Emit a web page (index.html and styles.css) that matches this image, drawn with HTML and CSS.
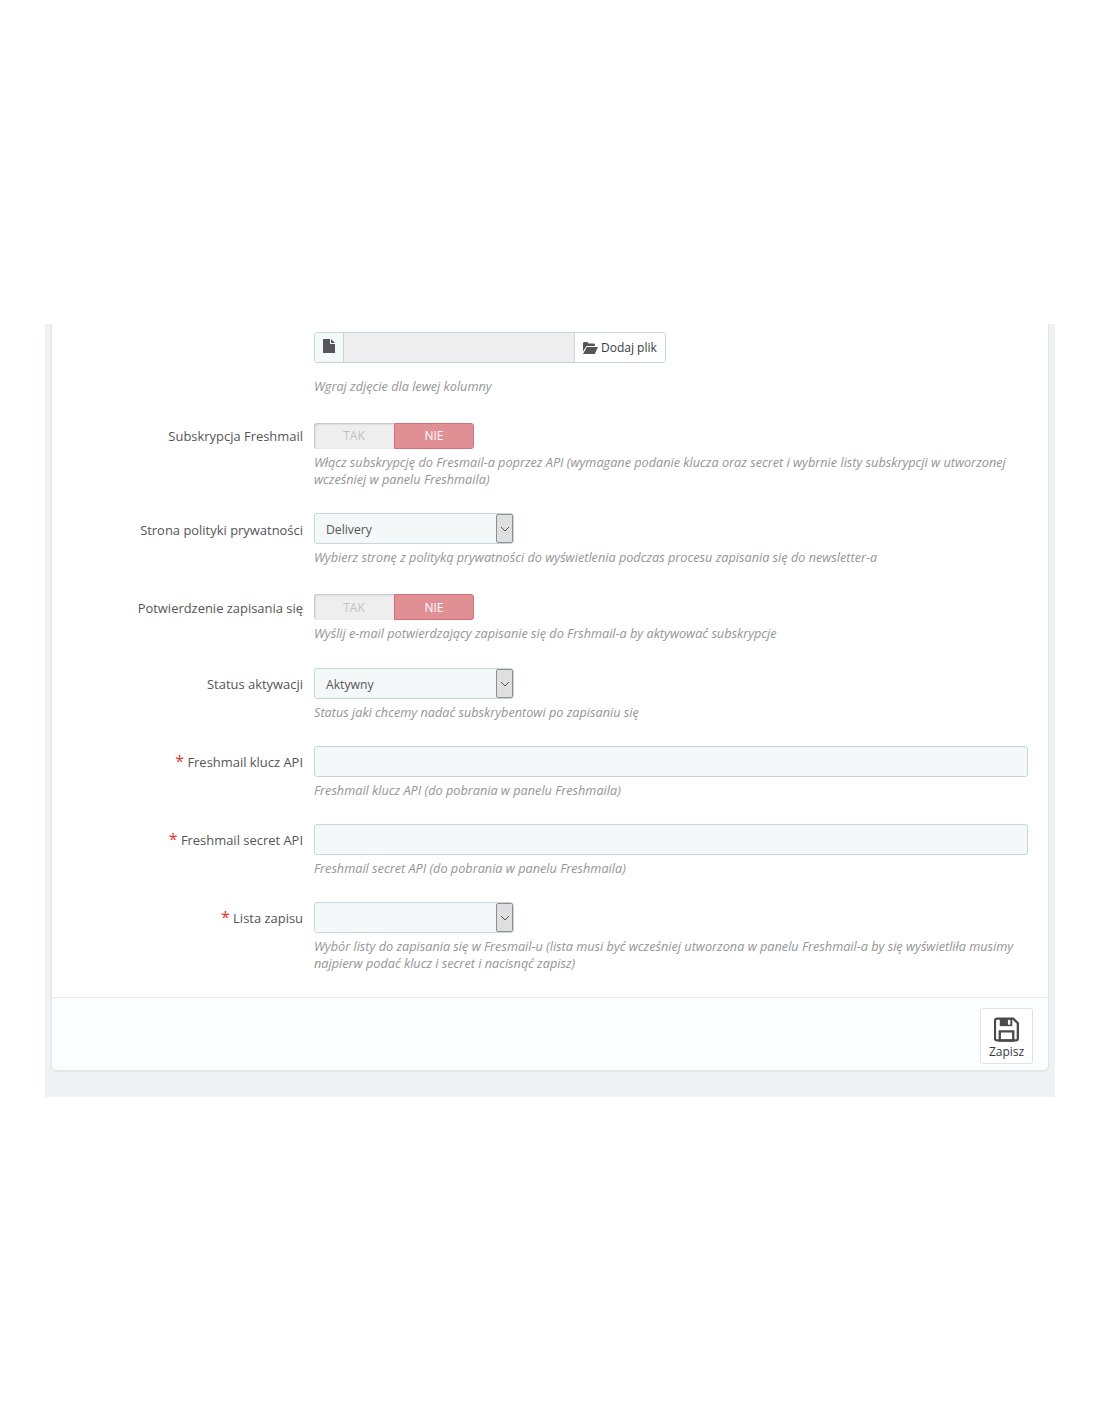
FILE: index.html
```html
<!DOCTYPE html>
<html lang="pl">
<head>
<meta charset="utf-8">
<title>Freshmail</title>
<link rel="stylesheet" href="styles.css">
</head>
<body>
<div class="page">
  <div class="panel">
    <form class="form">
      <div class="row row-wide">
        <div class="label"></div>
        <div class="control">
          <div class="file">
            <span class="file-icon"><svg width="12" height="14" viewBox="0 0 12 14"><path d="M0 0h7v5h5v9H0z" fill="#555"/><path d="M8 0l4 4H8z" fill="#555"/></svg></span>
            <span class="file-name"></span>
            <span class="file-btn"><svg width="15" height="12" viewBox="0 0 15 12"><path d="M0 1.500C0 .7.600 0 1.400 0h3l1.200 1.500h5c.8 0 1.400.6 1.400 1.400V4H3.500L0 9.500z" fill="#555"/><path d="M3.900 5H15l-3.200 7H0z" fill="#555"/></svg>Dodaj plik</span>
          </div>
          <p class="help help-file">Wgraj zdjęcie dla lewej kolumny</p>
        </div>
      </div>
      <div class="row">
        <div class="label label-toggle">Subskrypcja Freshmail</div>
        <div class="control">
          <div class="toggle"><span class="tak">TAK</span><span class="nie">NIE</span></div>
          <p class="help">Włącz subskrypcję do Fresmail-a poprzez API (wymagane podanie klucza oraz secret i wybrnie listy subskrypcji w utworzonej wcześniej w panelu Freshmaila)</p>
        </div>
      </div>
      <div class="row row-wide">
        <div class="label label-low">Strona polityki prywatności</div>
        <div class="control">
          <div class="select"><span class="select-value">Delivery</span><span class="select-arrow"><svg width="10" height="6" viewBox="0 0 10 6"><path d="M1 1l4 4 4-4" fill="none" stroke="#555" stroke-width="1"/></svg></span></div>
          <p class="help">Wybierz stronę z polityką prywatności do wyświetlenia podczas procesu zapisania się do newsletter-a</p>
        </div>
      </div>
      <div class="row row-confirm">
        <div class="label label-toggle">Potwierdzenie zapisania się</div>
        <div class="control">
          <div class="toggle"><span class="tak">TAK</span><span class="nie">NIE</span></div>
          <p class="help">Wyślij e-mail potwierdzający zapisanie się do Frshmail-a by aktywować subskrypcje</p>
        </div>
      </div>
      <div class="row">
        <div class="label">Status aktywacji</div>
        <div class="control">
          <div class="select"><span class="select-value">Aktywny</span><span class="select-arrow"><svg width="10" height="6" viewBox="0 0 10 6"><path d="M1 1l4 4 4-4" fill="none" stroke="#555" stroke-width="1"/></svg></span></div>
          <p class="help">Status jaki chcemy nadać subskrybentowi po zapisaniu się</p>
        </div>
      </div>
      <div class="row">
        <div class="label"><span class="req">*</span> Freshmail klucz API</div>
        <div class="control">
          <div class="input"></div>
          <p class="help">Freshmail klucz API (do pobrania w panelu Freshmaila)</p>
        </div>
      </div>
      <div class="row">
        <div class="label"><span class="req">*</span> Freshmail secret API</div>
        <div class="control">
          <div class="input"></div>
          <p class="help">Freshmail secret API (do pobrania w panelu Freshmaila)</p>
        </div>
      </div>
      <div class="row">
        <div class="label"><span class="req">*</span> Lista zapisu</div>
        <div class="control">
          <div class="select"><span class="select-value"></span><span class="select-arrow"><svg width="10" height="6" viewBox="0 0 10 6"><path d="M1 1l4 4 4-4" fill="none" stroke="#555" stroke-width="1"/></svg></span></div>
          <p class="help">Wybór listy do zapisania się w Fresmail-u (lista musi być wcześniej utworzona w panelu Freshmail-a by się wyświetliła musimy najpierw podać klucz i secret i nacisnąć zapisz)</p>
        </div>
      </div>
    </form>
    <div class="footer">
      <button class="save" type="button">
        <svg width="25" height="25" viewBox="0 0 26 25"><path d="M3 1.200h17l4.800 4.800v15.800c0 1.100-.9 2-2 2H3c-1.100 0-2-.9-2-2V3.200c0-1.100.9-2 2-2z" fill="none" stroke="#4a4a4a" stroke-width="2.400"/><path d="M6 1h13v8H6z" fill="#4a4a4a"/><path d="M14.500 2.500h2.500v5h-2.500z" fill="#fff"/><path d="M6 14.500h14V24H6z" fill="none" stroke="#4a4a4a" stroke-width="2.400"/></svg>
        <span>Zapisz</span>
      </button>
    </div>
  </div>
</div>
</body>
</html>
```
FILE: styles.css
```css
html, body {
  margin: 0;
  padding: 0;
  background: #fff;
}
body {
  padding-top: 324px;
  font-family: "Open Sans", "Liberation Sans", sans-serif;
  font-size: 13px;
  color: #555;
}
.page {
  margin: 0 45px;
  padding: 0 7px 27px;
  background: #eff1f2;
  overflow: hidden;
}
.panel {
  background: #fff;
  border-radius: 0 0 5px 5px;
  box-shadow: 0 0 0 1px #e3e5e6, 0 1px 2px rgba(0, 0, 0, .18);
}
.form {
  padding: 8px 20px 0 0;
}
.row {
  display: grid;
  grid-template-columns: 251px 1fr;
  column-gap: 11px;
  margin-bottom: 25px;
}
.row-wide { margin-bottom: 28px; }
.row-confirm { margin-bottom: 26px; }
.label {
  text-align: right;
  font-size: 12.950px;
  line-height: 18px;
  padding-top: 7px;
  color: #555;
}
.label-low { padding-top: 8px; }
.label-toggle { padding-top: 4px; }
.row-confirm .label-toggle { padding-top: 5px; }
.req {
  color: #e8312a;
  font-size: 16px;
  line-height: 14px;
}
.help {
  margin: 5px 0 0;
  font-style: italic;
  font-size: 12.700px;
  line-height: 17px;
  color: #959595;
}
.help-file { margin-top: 15px; }
.file {
  display: flex;
  width: 352px;
  height: 31px;
  box-sizing: border-box;
  border: 1px solid #c7d6db;
  border-radius: 3px;
  overflow: hidden;
}
.file-icon {
  flex: 0 0 29px;
  display: flex;
  align-items: center;
  justify-content: center;
  background: #f5f8f9;
  border-right: 1px solid #c7d6db;
  padding-bottom: 3px;
  box-sizing: border-box;
}
.file-name {
  flex: 1;
  background: #eee;
}
.file-btn {
  flex: 0 0 91px;
  display: flex;
  align-items: center;
  gap: 3px;
  padding-left: 8px;
  box-sizing: border-box;
  background: #fff;
  border-left: 1px solid #d3d8db;
  color: #363a41;
  font-size: 12px;
}
.toggle {
  display: flex;
  width: 160px;
  height: 26px;
  font-size: 12px;
  line-height: 26px;
  text-align: center;
}
.row-confirm .toggle { line-height: 28px; }
.tak {
  flex: 0 0 80px;
  color: #c3c3c3;
  background: #eee;
  border-radius: 3px 0 0 3px;
  box-shadow: inset 1px 1px 2px rgba(0, 0, 0, .2);
}
.nie {
  flex: 0 0 80px;
  box-sizing: border-box;
  color: #fff;
  line-height: 24px;
  background: #e08f95;
  border: 1px solid #cf7278;
  border-radius: 0 3px 3px 0;
}
.row-confirm .nie { line-height: 26px; }
.select {
  display: flex;
  width: 200px;
  height: 31px;
  box-sizing: border-box;
  background: #f5f8f9;
  border: 1px solid #c7d6db;
  border-radius: 3px;
  overflow: hidden;
}
.select-value {
  flex: 1;
  padding-left: 11px;
  font-size: 12.200px;
  line-height: 32px;
  color: #555;
}
.select-arrow {
  flex: 0 0 17px;
  display: flex;
  align-items: center;
  justify-content: center;
  box-sizing: border-box;
  background: #dfdfdf;
  border: 1px solid #8f8f8f;
  border-radius: 2px;
}
.input {
  height: 31px;
  box-sizing: border-box;
  background: #f5f8f9;
  border: 1px solid #c7d6db;
  border-radius: 3px;
}
.footer {
  display: flex;
  justify-content: flex-end;
  height: 73px;
  box-sizing: border-box;
  padding: 10px 15px 0 0;
  background: #fcfdfe;
  border-top: 1px solid #e8ebec;
  border-radius: 0 0 5px 5px;
}
.save {
  display: flex;
  flex-direction: column;
  align-items: center;
  width: 53px;
  height: 56px;
  box-sizing: border-box;
  padding: 8px 0 0;
  background: #fff;
  border: 1px solid #dfe3e5;
  border-radius: 3px;
  font-family: inherit;
  font-size: 12px;
  line-height: 16px;
  color: #363a41;
}
.save span { margin-top: 2px; }
```
